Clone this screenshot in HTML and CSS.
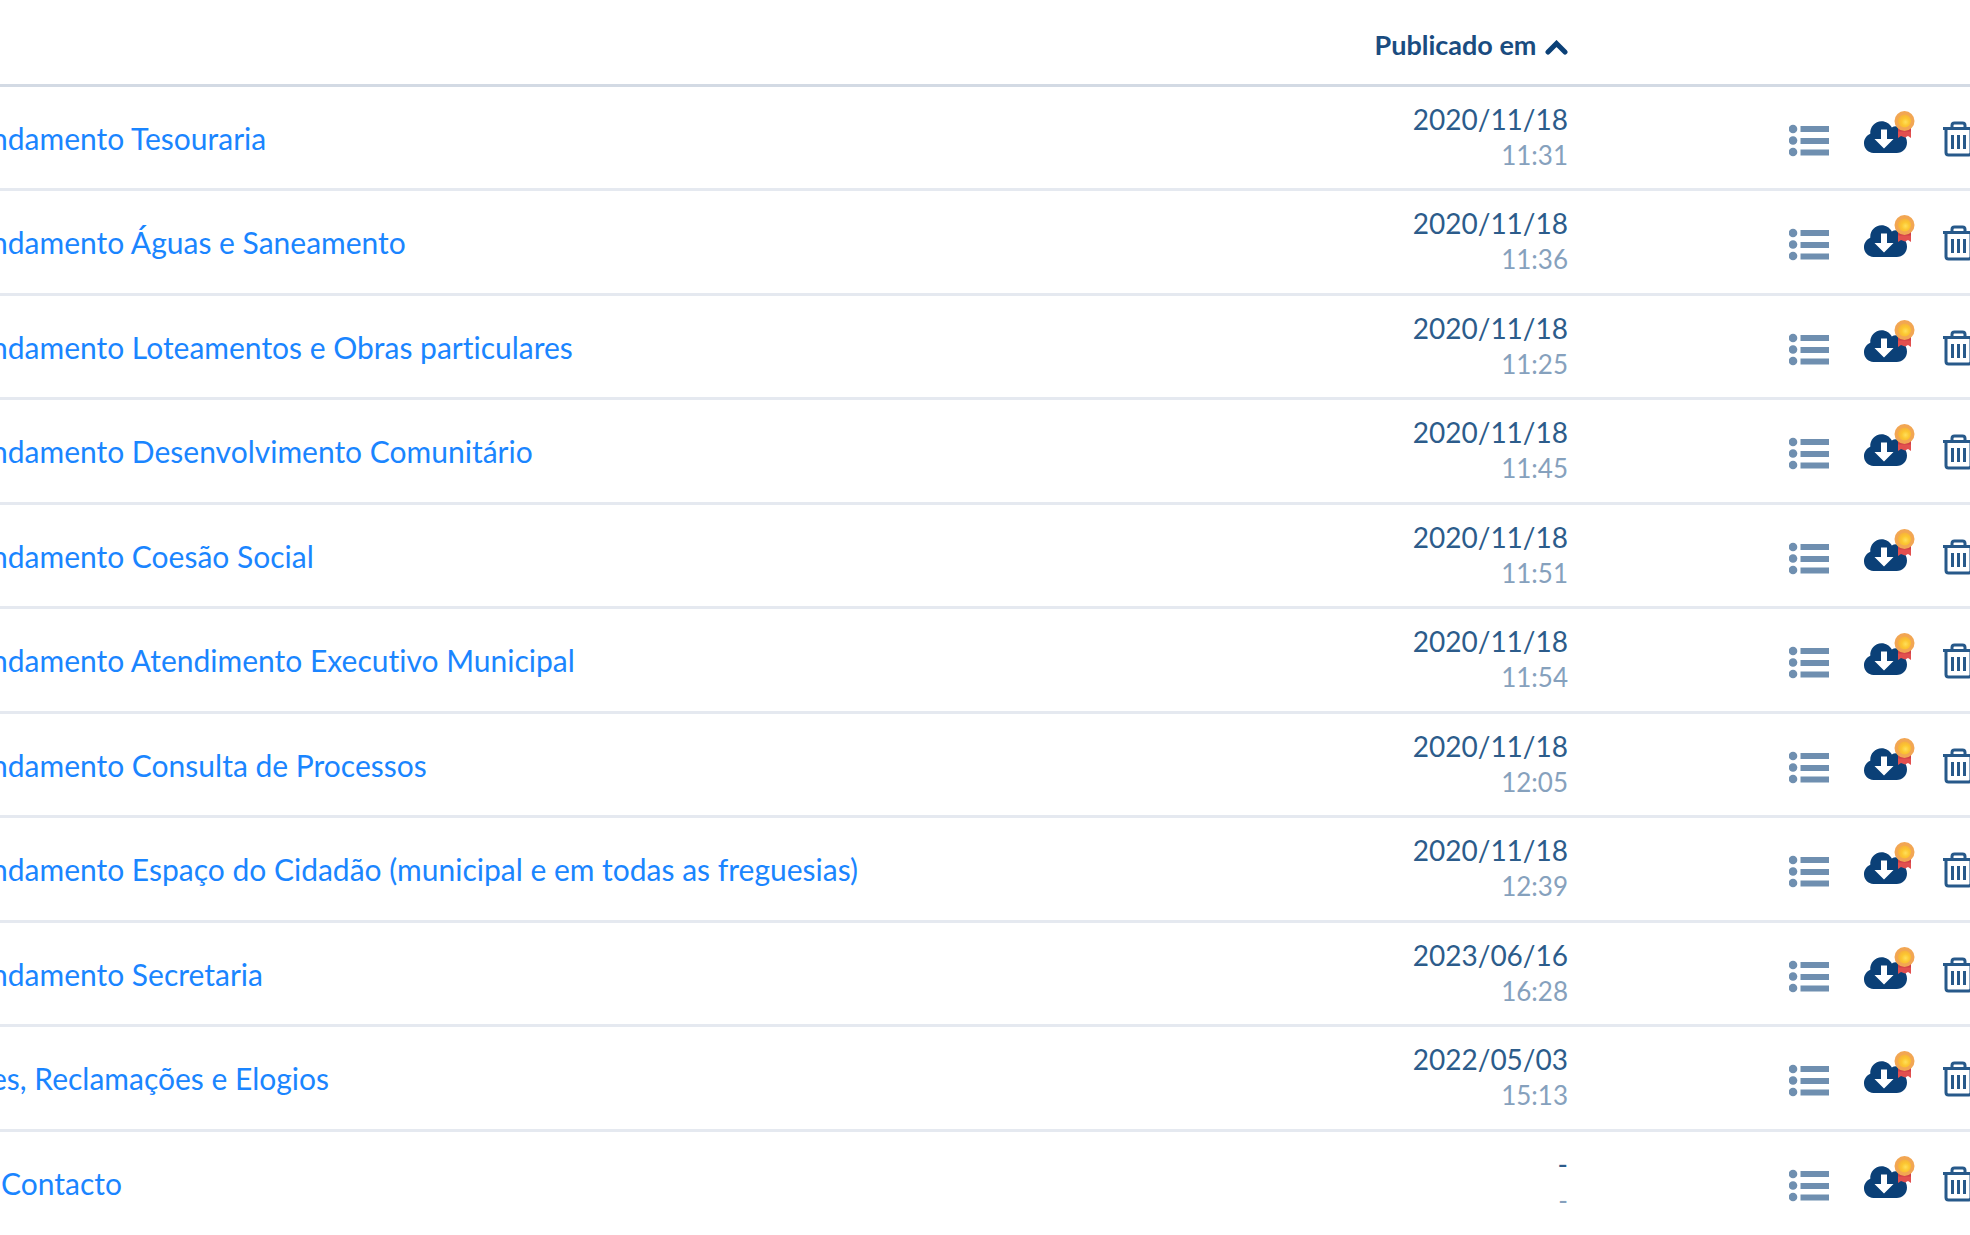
FILE: index.html
```
<!DOCTYPE html>
<html lang="pt">
<head>
  <meta charset="UTF-8">
  <title>Documentos publicados</title>
  <link rel="stylesheet" href="styles.css">
</head>
<body>
  <svg class="sprite" aria-hidden="true">
    <defs>
      <radialGradient id="gold" cx="58%" cy="58%" r="60%">
        <stop offset="0" stop-color="#ffdf5a"></stop>
        <stop offset="0.5" stop-color="#fcc630"></stop>
        <stop offset="1" stop-color="#f6b03c"></stop>
      </radialGradient>
    </defs>
    <symbol id="list" viewBox="0 0 40 34">
      <circle cx="4" cy="5" r="4.3"></circle>
      <circle cx="4" cy="16.500" r="4.3"></circle>
      <circle cx="4" cy="28" r="4.3"></circle>
      <path d="M11.500 2H40v6H11.500zM11.500 14H40v6H11.500zM11.500 25.500H40v6H11.500z"></path>
    </symbol>
    <symbol id="cloud" viewBox="0 0 52 46">
      <path class="navy" d="M9.500 43C4 42.500 0 38.500 0 33.200c0-4.300 2.600-7.900 6.300-9.400C5.800 17 11 11.300 17.500 11.300c4.500 0 8.300 2.500 10.300 6.200 1.200-.8 2.600-1.200 4.200-1.200 4.200 0 7.200 3.500 6.900 7.900 2.500 1.800 4.100 4.500 4.100 8.300 0 6-4.500 10.500-10.300 10.500z"></path>
      <path class="white" d="M17 19.500h6V29h6.500L20 38.500 10.500 29H17z"></path>
      <path fill="#e2504f" d="M34 18h13v10l-3-2-3 1.500-4-1.500-3 2z"></path>
      <path fill="#cf3f47" d="M34 18h13v3.500H34z"></path>
      <circle cx="40.500" cy="11" r="10" fill="#f2a653"></circle>
      <circle cx="40.500" cy="11" r="6.500" fill="url(#gold)"></circle>
    </symbol>
    <symbol id="trash" viewBox="0 0 36 36">
      <path d="M1 7.500h34M10 7V4.500Q10 2 12.500 2h8Q23 2 23 4.500V7M4 8v23.500Q4 34 6.500 34h20Q29 34 29 31.500V8"></path>
      <path d="M10.500 14v14M16.500 14v14M22.500 14v14"></path>
    </symbol>
  </svg>

  <table class="docs">
    <thead>
      <tr>
        <th class="name"></th>
        <th class="date">
          <button type="button" class="sort">Publicado em
            <svg class="chevron" viewBox="0 0 23 15"><path d="M3 12l8.500-8.500L20 12"></path></svg>
          </button>
        </th>
        <th class="actions"></th>
      </tr>
    </thead>
    <tbody id="tbody"></tbody>
  </table>

  <script>
    // nome, data, hora
    var rows = [
      ["ndamento Tesouraria", "2020/11/18", "11:31"],
      ["ndamento Águas e Saneamento", "2020/11/18", "11:36"],
      ["ndamento Loteamentos e Obras particulares", "2020/11/18", "11:25"],
      ["ndamento Desenvolvimento Comunitário", "2020/11/18", "11:45"],
      ["ndamento Coesão Social", "2020/11/18", "11:51"],
      ["ndamento Atendimento Executivo Municipal", "2020/11/18", "11:54"],
      ["ndamento Consulta de Processos", "2020/11/18", "12:05"],
      ["ndamento Espaço do Cidadão (municipal e em todas as freguesias)", "2020/11/18", "12:39"],
      ["ndamento Secretaria", "2023/06/16", "16:28"],
      ["es, Reclamações e Elogios", "2022/05/03", "15:13"],
      ["Contacto", "-", "-"]
    ];

    function iconButton(name, label){
      return '<button type="button" class="icon ' + name + '" aria-label="' + label + '">' +
        '<svg><use href="#' + name + '"></use></svg></button>';
    }

    var html = '';
    for(var i = 0; i < rows.length; i++){
      html += '<tr><td class="name"><a href="#">' + rows[i][0] + '</a></td>' +
        '<td class="date"><span class="day">' + rows[i][1] + '</span>' +
        '<span class="time">' + rows[i][2] + '</span></td>' +
        '<td class="actions"><div class="buttons">' +
        iconButton('list', 'Detalhes') +
        iconButton('cloud', 'Descarregar') +
        iconButton('trash', 'Eliminar') +
        '</div></td></tr>';
    }
    document.getElementById('tbody').innerHTML = html;
  </script>
</body>
</html>
```
FILE: styles.css
```
body {
  margin: 0;
  overflow: hidden;
  background-color: #fff;
  color: #1a4c80;
  font-family: Lato, "Noto Sans", sans-serif;
  font-size: 30px;
  font-variant-ligatures: none;
}
.sprite {
  position: absolute;
  width: 0;
  height: 0;
}
.docs {
  width: 100%;
  table-layout: fixed;
  border-collapse: separate;
  border-spacing: 0;
}
.docs th,
.docs td {
  box-sizing: border-box;
  padding: 0;
  vertical-align: middle;
}
.docs th {
  height: 87px;
  border-bottom: 3px solid #d3dae4;
}
.docs td {
  height: 104px;
  border-bottom: 3px solid #e5e9f0;
}
.docs tr:nth-child(even) td {
  height: 105px;
}
.docs tr:last-child td {
  border-bottom-color: transparent;
}
.name a {
  display: block;
  margin-left: -9px;
  color: #1a85ff;
  line-height: 36px;
  text-decoration: none;
  white-space: nowrap;
}
.docs tr:last-child .name a {
  margin-left: 1px;
}
.docs .date {
  width: 320px;
  text-align: right;
}
.docs td.date {
  padding-bottom: 2px;
}
.day,
.time {
  display: block;
  line-height: 36px;
}
.day {
  color: #2c5c8b;
  font-size: 28px;
}
.time {
  color: #86a1bd;
  font-size: 26px;
}
.docs .actions {
  width: 402px;
}
button {
  padding: 0;
  border: 0;
  background: none;
  color: inherit;
  font: inherit;
  cursor: pointer;
}
.sort {
  padding-top: 6px;
  font-size: 27px;
  font-weight: bold;
  line-height: 36px;
}
.chevron {
  width: 23px;
  height: 15px;
  margin-left: 2px;
  fill: none;
  stroke: #0b4077;
  stroke-width: 5;
  stroke-linecap: round;
}
.buttons {
  display: flex;
  align-items: center;
  padding-top: 2px;
  padding-left: 221px;
}
.icon {
  flex: none;
}
.icon svg {
  display: block;
  width: 100%;
  height: 100%;
}
.list {
  width: 40px;
  height: 34px;
  margin-top: 4px;
  margin-right: 35px;
  fill: #6f8fb0;
}
.cloud {
  width: 52px;
  height: 46px;
  margin-right: 26px;
  margin-bottom: 12px;
}
.trash {
  width: 36px;
  height: 36px;
  fill: none;
  stroke: #27598a;
  stroke-width: 3;
}
.navy {
  fill: #0b4077;
}
.white {
  fill: #fff;
}
```
